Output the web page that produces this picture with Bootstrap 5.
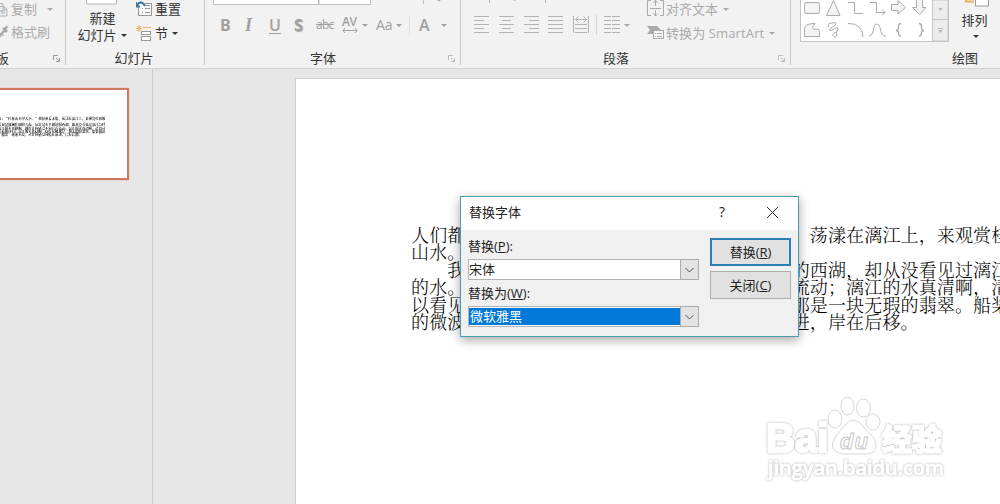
<!DOCTYPE html>
<html lang="zh-CN">
<head>
<meta charset="utf-8">
<title>替换字体</title>
<link href="https://cdn.jsdelivr.net/npm/bootstrap@5.3.0/dist/css/bootstrap.min.css" rel="stylesheet">
<style>
body{width:1000px;height:504px;overflow:hidden;background:#e6e6e6;font:13px/18px "Open Sans","Noto Sans CJK SC",sans-serif;color:#333}
svg{display:block;flex:none}
.ribbon{height:69px;background:#f2f2f2;border-bottom:1px solid #d2d2d2}
.grp{height:65px;flex:none;border-right:1px solid #c8c8c8}
.off{color:#aaa}
.cap{height:18px;margin-top:auto;margin-bottom:-2px}
.tools{height:49px}
.line1{height:18px}
.tri{width:0;height:0;border:3px solid transparent;border-top-color:currentColor;border-bottom:0;flex:none}
.fmt{font-weight:700;font-size:16px;color:#a0a0a0;height:22px}
.work{height:435px}
.thumbs{width:153px;border-right:1px solid #c9c9c9;flex:none;padding-top:19px}
.thumb{width:129px;height:92px;background:#fff;border:2px solid #cf7660;border-left:0;overflow:hidden;box-shadow:0 0 1px #e08a75}
.slide{margin:9px 0 0 142px;background:#fff;border:1px solid #cfcfcf;border-right:0;border-bottom:0;flex:1;min-width:0;overflow:hidden;padding:147px 0 0 115px}
.prose{font:18px/17.4px "Noto Serif CJK SC","Noto Sans CJK SC",serif;font-weight:300;letter-spacing:.13px;color:#000;white-space:pre;width:640px}
.q{display:inline-block;width:18.13px}
.mini{transform:scale(.185);transform-origin:0 0;margin:27px 0 0 -12px;font-weight:700}
.dlg{position:absolute;left:460px;top:196px;width:339px;height:141px;background:#f0f0f0;border:1px solid #4c9ab0;box-shadow:0 3px 10px rgba(0,0,0,.36);color:#222}
.dlg-title{height:33px;background:#fff;padding-bottom:3px}
.combo{width:231px;height:21px;background:#fff;border:1px solid #b4b4b4;line-height:19px}
.drop{width:19px;height:21px;margin:-1px;background:#e3e3e3;border:1px solid #adadad}
.pick{background:#0078d7;color:#fff;margin:1px 1px 1px 0}
.push{width:81px;height:28px;border-radius:0;padding:0;font:inherit;line-height:25px;background:#e1e1e1;border:1px solid #adadad;color:#222}
.push.main{border:2px solid #2880b4}
.wm{position:absolute;left:760px;top:390px}
.halo{filter:drop-shadow(0 0 .8px #aaa)}
</style>
</head>
<body>
<header class="ribbon d-flex">
  <section class="grp d-flex flex-column" style="width:66px">
    <div class="tools off">
      <div class="line1 d-flex align-items-center"><svg width="11" height="18" fill="#eee" stroke="#b4b4b4"><path d="M-1 3.500H3V11H-1M0 6.500H4L7 9.500V16H-1M4 6.500V9.500H7M1 11h4M1 13h4"/></svg>复制<i class="tri" style="margin-left:10px"></i></div>
      <div class="d-flex align-items-center" style="margin-top:5px"><svg width="11" height="18"><path d="M-1 14L4 8M3 5L7 9M5 7L7 3" stroke="#aaa" stroke-width="2.500"/><path d="M0 10L4 13" stroke="#aaa"/></svg>格式刷</div>
    </div>
    <div class="cap d-flex align-items-center justify-content-between"><span style="margin-left:-4px">板</span><svg class="me-1" width="9" height="8" fill="none" stroke="#999"><path d="M1.500 6V1.500H6M4 4L7 7M7.500 4V7.500H4"/></svg></div>
  </section>
  <section class="grp d-flex flex-column" style="width:139px">
    <div class="tools d-flex">
      <div class="d-flex flex-column align-items-center" style="width:71px">
        <svg width="32" height="10" fill="#fff" stroke="#b0b0b0"><rect x=".5" y="-8" width="30" height="12" rx="1"/></svg>
        <span style="line-height:17px;margin-left:2px">新建</span>
        <span class="d-flex align-items-center" style="line-height:17px;margin-left:1px">幻灯片<i class="tri ms-1"></i></span>
      </div>
      <div style="margin-left:-1px">
        <div class="line1 d-flex align-items-center"><svg width="19" height="18" fill="none" stroke="#999"><rect x="2.500" y="3.500" width="13" height="12" fill="#f8f8f8"/><path d="M6 8.500h1M9 8.500h5M6 12.500h1M9 12.500h5M9 5.500h5"/><path d="M0 7L0 2M0 6.500H4M1 5Q5-1 9 6" stroke="#387ca5" stroke-width="2"/></svg>重置</div>
        <div class="d-flex align-items-center" style="margin-top:6px"><svg width="19" height="18" fill="none" stroke="#999"><path d="M3 1V8M0 4.500H6M1 2L5 7M5 2L1 7M7 3.500H15" stroke="#e8b45c"/><rect x="5.500" y="7.500" width="9" height="3" fill="#fff"/><rect x="5.500" y="12.500" width="9" height="4" fill="#fff"/></svg>节<i class="tri ms-1"></i></div>
      </div>
    </div>
    <div class="cap text-center" style="padding-right:2px">幻灯片</div>
  </section>
  <section class="grp d-flex flex-column" style="width:256px">
    <div class="tools off">
      <div class="d-flex" style="padding-left:8px;height:14px"><svg width="240" height="8" fill="#fff" stroke="#bfbfbf"><rect x=".5" y="-5" width="105" height="9.500"/><rect x="106" y="-5" width="51.500" height="9.500"/><path d="M210.500 0V4"/><path d="M224 0h4l-2 1.500z" fill="#aaa" stroke="none"/></svg></div>
      <div class="fmt d-flex align-items-center">
        <span style="margin-left:15px;width:25px">B</span><span class="fst-italic" style="width:24px;font-family:'Liberation Serif',serif;font-size:18px">I</span><span style="width:25px;font-weight:600;text-decoration:underline;text-underline-offset:2px;text-decoration-thickness:1px">U</span><span style="width:22px;text-shadow:1px 1px 1px #aaa">S</span><span class="fw-normal text-decoration-line-through" style="width:26px;font-size:12px;letter-spacing:-.7px">abc</span>
        <svg width="17" height="22"><text x="0" y="12" textLength="15" font-family="Open Sans" font-weight="600" font-size="12" fill="#a0a0a0">AV</text><path d="M1 16.500H15M3 14L1 16.500L3 19M13 14L15 16.500L13 19" fill="none" stroke="#a0a0a0"/></svg><i class="tri" style="margin-left:3px;margin-right:-1px"></i>
        <span class="fw-normal" style="margin-left:9px;width:20px;font-size:14px">Aa</span><i class="tri"></i>
        <span class="border-end" style="height:20px;width:8px"></span><span style="margin-left:9px;width:22px;font-weight:600">A</span><i class="tri"></i>
      </div>
    </div>
    <div class="cap d-flex align-items-center justify-content-end">字体<svg style="margin:0 4px 0 111px" width="9" height="8" fill="none" stroke="#bbb"><path d="M1.500 6V1.500H6M4 4L7 7M7.500 4V7.500H4"/></svg></div>
  </section>
  <section class="grp d-flex flex-column" style="width:330px">
    <div class="tools d-flex off">
      <svg width="184" height="49" fill="none" stroke="#b3b3b3"><path d="M28.500 0V3M84.500 0V3M52 0h3"/>
        <path d="M13 16.500h15M13 20.500h10M13 24.500h15M13 28.500h10M13 32.500h15M38 16.500h15M41 20.500h9M38 24.500h15M41 28.500h9M38 32.500h15M63 16.500h15M68 20.500h10M63 24.500h15M68 28.500h10M63 32.500h15M87 16.500h15M87 20.500h15M87 24.500h15M87 28.500h15M87 32.500h15"/>
        <path d="M112.500 16V33M127.500 16V33M114 24.500h12M114 28.500h12M114 32.500h12M114.500 19.500h11M117.500 16.500l-3 3 3 3M122.500 16.500l3 3-3 3"/><path d="M135.500 15V35" stroke="#d4d4d4"/>
        <path d="M143 16.500h7M151 16.500h8M143 20.500h7M151 20.500h8M143 24.500h7M151 24.500h8M143 28.500h7M151 28.500h8M143 32.500h7M151 32.500h8"/><path d="M163 24h6l-3 3z" fill="#aaa" stroke="none"/></svg>
      <div class="text-nowrap">
        <div class="line1 d-flex align-items-center"><svg width="21" height="18" fill="none" stroke="#aaa"><path d="M6 .500H2.500V15.500H6M15 .500H18.500V15.500H15M5 8.500H16M10.500 0V6M10.500 10V16M8 3L10.500.500L13 3M8 13.500L10.500 16L13 13.500"/></svg>对齐文本<i class="tri" style="margin-left:5px"></i></div>
        <div class="d-flex align-items-center" style="margin-top:6px"><svg width="21" height="18" fill="#f5f5f5" stroke="#aaa"><path d="M2 2H12L16 6L12 10H2L5 6Z" fill="#aaa" stroke="none"/><rect x="8.500" y="6.500" width="10" height="8"/><path d="M10 9.500h1M12 9.500h5M10 12.500h1M12 12.500h5"/></svg><span style="letter-spacing:.12px">转换为 SmartArt</span><i class="tri" style="margin-left:5px"></i></div>
      </div>
    </div>
    <div class="cap d-flex align-items-center justify-content-end">段落<svg style="margin:0 4px 0 148px" width="9" height="8" fill="none" stroke="#bbb"><path d="M1.500 6V1.500H6M4 4L7 7M7.500 4V7.500H4"/></svg></div>
  </section>
  <section class="grp border-0 d-flex flex-column" style="width:209px">
    <div class="tools d-flex">
      <svg style="margin-left:9px" width="150" height="49" fill="#f5f3f7" stroke="#aaa"><rect x=".5" y="-5" width="148" height="46.500" fill="#fff" stroke="#c6c6c6"/><path d="M132.500 0V41H148V0ZM132.500 19.500H148" fill="#ececec" stroke="#c6c6c6"/><path d="M138 8h5l-2.500 3zM138 30h5l-2.500 3z" fill="#bbb" stroke="none"/><path d="M138 28.500h5" stroke="#bbb"/>
        <rect x="4.500" y="2.500" width="15" height="11" rx="2"/><path d="M33.500 0.500L40 15.500H26.500ZM91.500 4.500H98V.500L105.500 7.500L98 14V10.500H91.500ZM116.500 -1H122.500V7.500H126L119.500 14.500L112.500 7.500H116.500Z"/>
        <path d="M48 2.500h6.500V13.500H63M70 2.500h6.500V12.500H85M82 9.500l3 3-3 3" fill="none"/>
        <path d="M4.500 36.500V28.500Q4.500 23.500 15 23.500Q11 28 14 29.500Q19.500 28 19.500 32V36.500Z"/><path d="M29 27Q27 23 32 23Q38 22 35 25L30 29Q29 32 32 30Q38 26 38 29Q38 32 34 33Q31 36 35 37Q38 36 36 32M48 23.500Q62 23 63 37M69 36C75 36 72 23 77 24C82 25 79 37 86 36" fill="none"/><path d="M101 23.500Q98.500 23.500 98.500 27T96 30.500Q98.500 30.500 98.500 33T101 36.500M119 23.500Q121.500 23.500 121.500 27T124 30.500Q121.500 30.500 121.500 33T119 36.500" fill="none" stroke-width="1.300"/></svg>
      <div class="d-flex flex-column align-items-center" style="margin-left:11px;width:30px">
        <svg width="30" height="11"><path d="M5 0V1.500H13" stroke="#e8b45c" fill="none" stroke-width="2"/><rect x="14.500" y="-5" width="13" height="11" fill="#fff" stroke="#999"/></svg>
        <span class="text-nowrap" style="margin-left:-3px">排列</span><i class="tri" style="margin-top:6px"></i>
      </div>
    </div>
    <div class="cap" style="padding-left:161px">绘图</div>
  </section>
</header>
<main class="work d-flex">
  <aside class="thumbs"><div class="thumb"><div class="prose mini">人们都说：<span class="q text-end">“</span>桂林山水甲天下。<span class="q">”</span>我们乘着木船，荡漾在漓江上，来观赏桂林的
山水。
　　我看见过波澜壮阔的大海，玩赏过水平如镜的西湖，却从没看见过漓江这样
的水。漓江的水真静啊，静得让你感觉不到它在流动；漓江的水真清啊，清得可
以看见江底的沙石；漓江的水真绿啊，绿得仿佛那是一块无瑕的翡翠。船桨激起
的微波扩散出一道道水纹，才让你感觉到船在前进，岸在后移。</div></div></aside>
  <article class="slide"><div class="prose">人们都说：<span class="q text-end">“</span>桂林山水甲天下。<span class="q">”</span>我们乘着木船，荡漾在漓江上，来观赏桂林的
山水。
　　我看见过波澜壮阔的大海，玩赏过水平如镜的西湖，却从没看见过漓江这样
的水。漓江的水真静啊，静得让你感觉不到它在流动；漓江的水真清啊，清得可
以看见江底的沙石；漓江的水真绿啊，绿得仿佛那是一块无瑕的翡翠。船桨激起
的微波扩散出一道道水纹，才让你感觉到船在前进，岸在后移。</div></article>
</main>
<div class="dlg" role="dialog">
  <div class="dlg-title d-flex align-items-center"><span class="flex-grow-1" style="padding-left:8px">替换字体</span><span style="font-size:14px;margin-right:42px">?</span><svg style="margin-right:20px" width="11" height="11" stroke="#333"><path d="M0 0L11 11M11 0L0 11"/></svg></div>
  <div class="d-flex">
    <div style="padding:7px 0 0 7px;width:249px">
      <div style="height:22px">替换(<u>P</u>):</div>
      <div class="combo d-flex"><span class="flex-grow-1">宋体</span><span class="drop d-flex align-items-center justify-content-center"><svg width="9" height="6" fill="none" stroke="#555"><path d="M.5 1L4.500 5L8.500 1"/></svg></span></div>
      <div style="height:26px;padding-top:4px">替换为(<u>W</u>):</div>
      <div class="combo d-flex"><span class="pick flex-grow-1" style="line-height:17px;padding-left:1px">微软雅黑</span><span class="drop d-flex align-items-center justify-content-center"><svg width="9" height="6" fill="none" stroke="#555"><path d="M.5 1L4.500 5L8.500 1"/></svg></span></div>
    </div>
    <div class="d-flex flex-column" style="padding-top:8px;gap:5px"><button class="btn push main">替换(<u>R</u>)</button><button class="btn push">关闭(<u>C</u>)</button></div>
  </div>
</div>
<svg class="wm" width="200" height="100" fill="#fff" stroke="#d6d6d6">
  <ellipse cx="75" cy="29" rx="7" ry="9"/><ellipse cx="87.500" cy="16" rx="6.500" ry="9"/><ellipse cx="103.500" cy="18" rx="7" ry="9"/><ellipse cx="113" cy="32" rx="7" ry="8"/>
  <path d="M84 36Q94 24 103 36Q107 42 114 48Q121 64 105 64H82Q66 60 76 46Z"/>
  <g class="halo" stroke="#fff" stroke-width="2.400" stroke-linejoin="round">
    <text x="6" y="62" font-family="Liberation Sans" font-weight="700" font-size="40">Bai</text>
    <text x="122" y="60" font-family="Noto Sans CJK SC" font-size="30" font-weight="900" stroke-width="1.500">经验</text>
    <text x="8" y="85" font-family="Open Sans" font-size="20" font-weight="600" textLength="176" lengthAdjust="spacingAndGlyphs" stroke-width=".8">jingyan.baidu.com</text>
  </g>
  <text x="80" y="59" font-family="Liberation Sans" font-size="22" font-weight="700" font-style="italic" textLength="28" stroke="#c8c8c8">du</text>
</svg>
<script src="https://cdn.jsdelivr.net/npm/bootstrap@5.3.0/dist/js/bootstrap.bundle.min.js"></script>
</body>
</html>
